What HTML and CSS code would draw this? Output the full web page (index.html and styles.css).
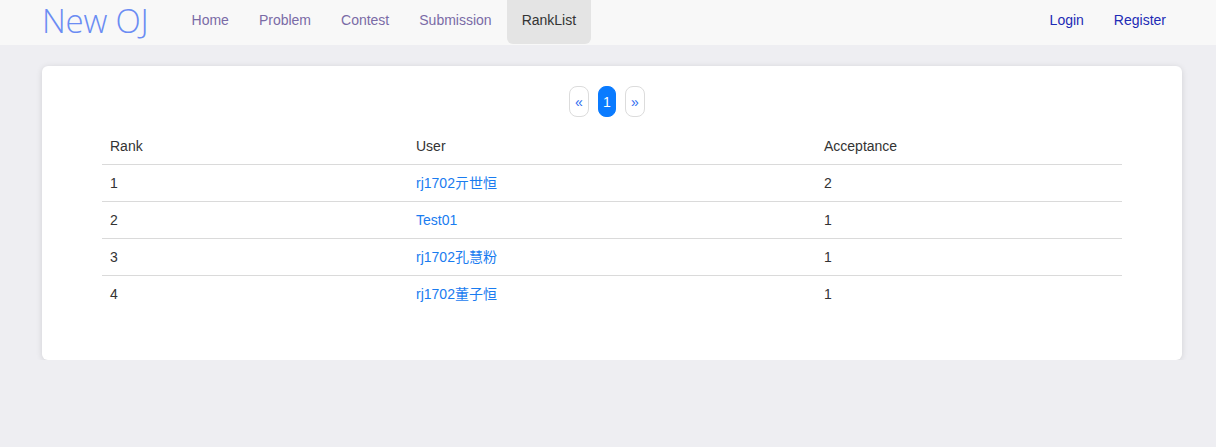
FILE: index.html
```html
<!DOCTYPE html>
<html>
<head>
<meta charset="utf-8">
<link rel="stylesheet" href="styles.css">
</head>
<body>
<header class="navbar">
  <a class="brand">New OJ</a>
  <nav class="nav-main">
    <a class="nav-link">Home</a>
    <a class="nav-link">Problem</a>
    <a class="nav-link">Contest</a>
    <a class="nav-link">Submission</a>
    <a class="nav-link active">RankList</a>
  </nav>
  <nav class="nav-user">
    <a class="user-link">Login</a>
    <a class="user-link">Register</a>
  </nav>
</header>
<main class="content">
  <section class="card">
    <div class="pagination">
      <a class="page">&laquo;</a>
      <a class="page current">1</a>
      <a class="page">&raquo;</a>
    </div>
    <table class="rank-table">
      <thead>
        <tr><th class="c-rank">Rank</th><th class="c-user">User</th><th class="c-acc">Acceptance</th></tr>
      </thead>
      <tbody>
        <tr><td>1</td><td><a class="ulink">rj1702亓世恒</a></td><td>2</td></tr>
        <tr><td>2</td><td><a class="ulink">Test01</a></td><td>1</td></tr>
        <tr><td>3</td><td><a class="ulink">rj1702孔慧粉</a></td><td>1</td></tr>
        <tr><td>4</td><td><a class="ulink">rj1702董子恒</a></td><td>1</td></tr>
      </tbody>
    </table>
  </section>
</main>
</body>
</html>
```
FILE: styles.css
```css
* { box-sizing: border-box; }
html, body { margin: 0; padding: 0; }
body {
  background: #eeeef2;
  font-family: "Liberation Sans", Arial, "Noto Sans CJK SC", sans-serif;
  font-size: 14px;
  color: #333;
}
a { text-decoration: none; cursor: pointer; }

.navbar {
  height: 45px;
  background: #f8f8f8;
  display: flex;
  align-items: flex-start;
  padding: 0 35px 0 42px;
}
.brand {
  font-family: "Open Sans", "Noto Sans", sans-serif;
  font-weight: 300;
  font-size: 33px;
  color: #6b8cf3;
  line-height: 45px;
  margin-top: -2px;
  flex-shrink: 0;
  margin-right: 28px;
  letter-spacing: -0.2px;
  white-space: nowrap;
}
.nav-main { display: flex; align-items: stretch; }
.nav-link {
  display: flex;
  align-items: center;
  padding: 0 15px;
  color: #7a6ba6;
  height: 44px;
  padding-bottom: 4px;
}
.nav-link.active {
  background: #e4e4e4;
  color: #333;
  border-radius: 0 0 6px 6px;
}
.nav-user { margin-left: auto; display: flex; align-items: stretch; }
.user-link {
  display: flex;
  align-items: center;
  padding: 0 15px;
  height: 44px;
  padding-bottom: 4px;
  color: #1d2bb5;
}

.content { padding: 21px 34px 0 42px; }
.card {
  background: #fff;
  border-radius: 6px;
  box-shadow: 0 1px 6px rgba(0,0,0,0.12);
  padding: 20px 60px 47px;
  width: 1140px;
}
.pagination {
  display: flex;
  justify-content: center;
  gap: 9px;
  margin-bottom: 11px;
  padding-right: 10px;
}
.page {
  width: 20px;
  height: 31px;
  border: 1px solid #dcdcdc;
  border-radius: 8px;
  display: flex;
  align-items: center;
  justify-content: center;
  color: #2f6df0;
  font-size: 14px;
}
.page.current {
  background: #0a7bff;
  border-color: #0a7bff;
  color: #fff;
  width: 18px;
}
.rank-table {
  width: 1020px;
  border-collapse: collapse;
  table-layout: fixed;
}
.rank-table th, .rank-table td {
  text-align: left;
  font-weight: normal;
  padding: 10px 8px;
  line-height: 16px;
  height: 37px;
}
.rank-table th { padding-top: 10px; padding-bottom: 10px; height: 36px; }
.rank-table thead tr { border-bottom: 1px solid #dadada; }
.rank-table tbody tr { border-bottom: 1px solid #dadada; }
.rank-table tbody tr:last-child { border-bottom: none; }
.c-rank { width: 306px; }
.c-user { width: 408px; }
.c-acc { width: 306px; }
.ulink { color: #1a7cf0; }
```
